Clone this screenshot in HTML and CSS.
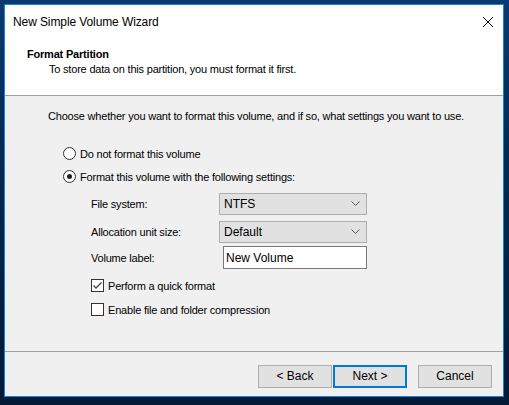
FILE: index.html
```html
<!DOCTYPE html>
<html>
<head>
<meta charset="utf-8">
<link rel="stylesheet" href="styles.css">
</head>
<body>
<div class="window">
  <div class="titlebar">
    <span class="title">New Simple Volume Wizard</span>
    <svg class="close" width="12" height="12" viewBox="0 0 12 12"><path d="M1 1L11 11M11 1L1 11" stroke="#000" stroke-width="1" fill="none"/></svg>
  </div>
  <div class="header">
    <div class="h-title">Format Partition</div>
    <div class="h-sub">To store data on this partition, you must format it first.</div>
  </div>
  <div class="content">
    <div class="intro">Choose whether you want to format this volume, and if so, what settings you want to use.</div>
    <div class="radios">
      <div class="radio-row"><span class="radio"></span><span>Do not format this volume</span></div>
      <div class="radio-row"><span class="radio checked"></span><span>Format this volume with the following settings:</span></div>
    </div>
    <div class="settings">
      <div class="field"><span class="lbl">File system:</span><div class="combo"><span>NTFS</span><svg width="9" height="5" viewBox="0 0 9 5"><path d="M0.5 0.5L4.5 4.5L8.5 0.5" stroke="#555" fill="none"/></svg></div></div>
      <div class="field"><span class="lbl">Allocation unit size:</span><div class="combo"><span>Default</span><svg width="9" height="5" viewBox="0 0 9 5"><path d="M0.5 0.5L4.5 4.5L8.5 0.5" stroke="#555" fill="none"/></svg></div></div>
      <div class="field last"><span class="lbl">Volume label:</span><div class="textbox">New Volume</div></div>
    </div>
    <div class="checks">
      <div class="check-row"><span class="checkbox"><svg width="11" height="11" viewBox="0 0 11 11"><path d="M1.5 5.5L4 8L9.5 2.5" stroke="#444" stroke-width="1.3" fill="none"/></svg></span><span>Perform a quick format</span></div>
      <div class="check-row"><span class="checkbox"></span><span>Enable file and folder compression</span></div>
    </div>
  </div>
  <div class="footer">
    <button class="btn">&lt; Back</button>
    <button class="btn default">Next &gt;</button>
    <button class="btn cancel">Cancel</button>
  </div>
</div>
</body>
</html>
```
FILE: styles.css
```css
html, body {
  margin: 0;
  padding: 0;
  width: 509px;
  height: 405px;
  overflow: hidden;
}
body {
  background: linear-gradient(180deg, #0b3a70 0%, #062850 40%, #021a36 100%);
  font-family: "Liberation Sans", Arial, sans-serif;
  font-size: 11px;
  letter-spacing: -0.2px;
  color: #000;
}
.window {
  margin: 4px 0 0 4px;
  width: 498px;
  height: 391px;
  border: 1px solid #1883d7;
  background: #f0f0f0;
  display: flex;
  flex-direction: column;
}
.titlebar {
  height: 30px;
  background: #fff;
  display: flex;
  align-items: center;
  justify-content: space-between;
  padding: 4px 9px 0 8px;
  box-sizing: border-box;
}
.title {
  font-size: 12px;
  letter-spacing: -0.1px;
}
.header {
  background: #fff;
  height: 61px;
  border-bottom: 1px solid #a0a0a0;
  padding: 12px 0 0 22px;
  box-sizing: border-box;
}
.h-title {
  font-weight: bold;
  font-size: 11px;
  line-height: 14px;
}
.h-sub {
  padding-left: 22px;
  line-height: 16px;
}
.content {
  flex: 1;
  padding: 13px 0 0 43px;
}
.intro {
  line-height: 14px;
}
.radios {
  margin-top: 24px;
  padding-left: 15px;
  display: flex;
  flex-direction: column;
  gap: 10px;
}
.radio-row, .check-row {
  display: flex;
  align-items: center;
  gap: 4px;
  height: 13px;
}
.radio {
  width: 11px;
  height: 11px;
  border: 1px solid #333;
  border-radius: 50%;
  background: #fff;
  position: relative;
  box-sizing: content-box;
}
.radio.checked::after {
  content: "";
  position: absolute;
  left: 3px;
  top: 3px;
  width: 5px;
  height: 5px;
  border-radius: 50%;
  background: #222;
}
.settings {
  margin-top: 9px;
  padding-left: 43px;
  display: flex;
  flex-direction: column;
  gap: 5px;
}
.field {
  display: flex;
  align-items: center;
  height: 23px;
}
.field.last {
  margin-top: -2px;
}
.lbl {
  width: 128px;
}
.combo {
  width: 148px;
  height: 22px;
  border: 1px solid #adadad;
  background: #e1e1e1;
  display: flex;
  align-items: center;
  justify-content: space-between;
  padding: 0 6px 0 4px;
  box-sizing: border-box;
  font-size: 12px;
  letter-spacing: 0;
}
.textbox {
  width: 144px;
  margin-left: 4px;
  height: 23px;
  border: 1px solid #7a7a7a;
  background: #fff;
  padding: 0 2px;
  box-sizing: border-box;
  display: flex;
  align-items: center;
  font-size: 12px;
  letter-spacing: 0;
}
.checks {
  margin-top: 10px;
  padding-left: 43px;
  display: flex;
  flex-direction: column;
  gap: 11px;
}
.checkbox {
  width: 11px;
  height: 11px;
  border: 1px solid #333;
  background: #fff;
  box-sizing: content-box;
  display: flex;
  align-items: center;
  justify-content: center;
}
.footer {
  height: 45px;
  border-top: 1px solid #a0a0a0;
  display: flex;
  align-items: center;
  padding-left: 253px;
  padding-top: 4px;
  box-sizing: border-box;
}
.btn {
  width: 74px;
  height: 23px;
  border: 1px solid #adadad;
  background: #e1e1e1;
  font-family: "Liberation Sans", Arial, sans-serif;
  font-size: 12px;
  color: #000;
  padding: 0;
  margin: 0 1px 0 0;
  box-sizing: border-box;
}
.btn.default {
  border: 2px solid #0078d7;
}
.btn.cancel {
  margin-left: 10px;
}
```
